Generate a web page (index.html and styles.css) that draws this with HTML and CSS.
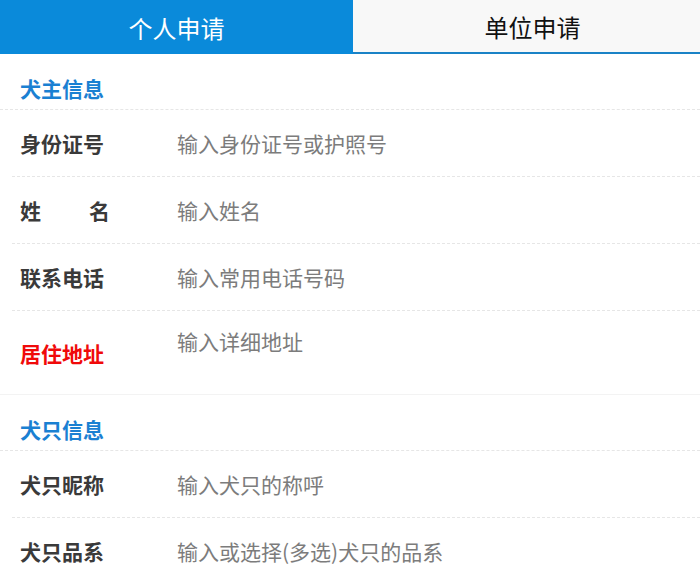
FILE: index.html
```html
<!DOCTYPE html>
<html lang="zh-CN">
<head>
<meta charset="utf-8">
<title>犬只登记申请</title>
<link rel="stylesheet" href="styles.css">
</head>
<body>
<div class="tabs">
  <div class="tab tab-active">个人申请</div>
  <div class="tab tab-idle">单位申请</div>
</div>

<div class="section-title">犬主信息</div>
<div class="row">
  <div class="label">身份证号</div>
  <div class="input">输入身份证号或护照号</div>
</div>
<div class="row">
  <div class="label label-spread"><span>姓</span><span>名</span></div>
  <div class="input">输入姓名</div>
</div>
<div class="row">
  <div class="label">联系电话</div>
  <div class="input">输入常用电话号码</div>
</div>
<div class="row row-tall">
  <div class="label label-red">居住地址</div>
  <div class="input input-area">输入详细地址</div>
</div>

<div class="section-title">犬只信息</div>
<div class="row">
  <div class="label">犬只昵称</div>
  <div class="input">输入犬只的称呼</div>
</div>
<div class="row">
  <div class="label">犬只品系</div>
  <div class="input">输入或选择(多选)犬只的品系</div>
</div>
</body>
</html>
```

FILE: styles.css
```css
html, body {
  margin: 0;
  padding: 0;
  background: #ffffff;
  font-family: "Noto Sans CJK SC", "Noto Sans", "Liberation Sans", sans-serif;
}

.tabs {
  display: flex;
  height: 54px;
}

.tab {
  display: flex;
  align-items: center;
  justify-content: center;
  font-size: 24px;
  box-sizing: border-box;
}

.tab-active {
  width: 353px;
  background: #0a8ada;
  color: #ffffff;
}

.tab-idle {
  flex: 1;
  background: #f8f8f8;
  color: #111111;
  border-bottom: 2px solid #1a82c6;
  padding-left: 12px;
}

.section-title {
  height: 56px;
  box-sizing: border-box;
  display: flex;
  align-items: center;
  padding: 12px 20px 0;
  font-size: 21px;
  font-weight: bold;
  color: #1a80d2;
  border-bottom: 1px dashed #e6e6e6;
}

.row {
  display: flex;
  align-items: center;
  height: 67px;
  box-sizing: border-box;
  margin-left: 12px;
  border-bottom: 1px dashed #e6e6e6;
}

.row-tall {
  height: 84px;
  margin-left: 0;
  padding-left: 12px;
  align-items: stretch;
  border-bottom: 1px solid #f3f3f3;
}

.label {
  width: 165px;
  flex: none;
  box-sizing: border-box;
  padding-left: 8px;
  font-size: 21px;
  font-weight: bold;
  color: #3a3a3a;
  display: flex;
  align-items: center;
}

.label-spread {
  width: 98px;
  margin-right: 67px;
  justify-content: space-between;
}

.label-red {
  color: #f00a0a;
}

.input {
  font-size: 21px;
  color: #7c7c7c;
}

.input-area {
  padding-top: 15px;
  line-height: 30px;
}
```
